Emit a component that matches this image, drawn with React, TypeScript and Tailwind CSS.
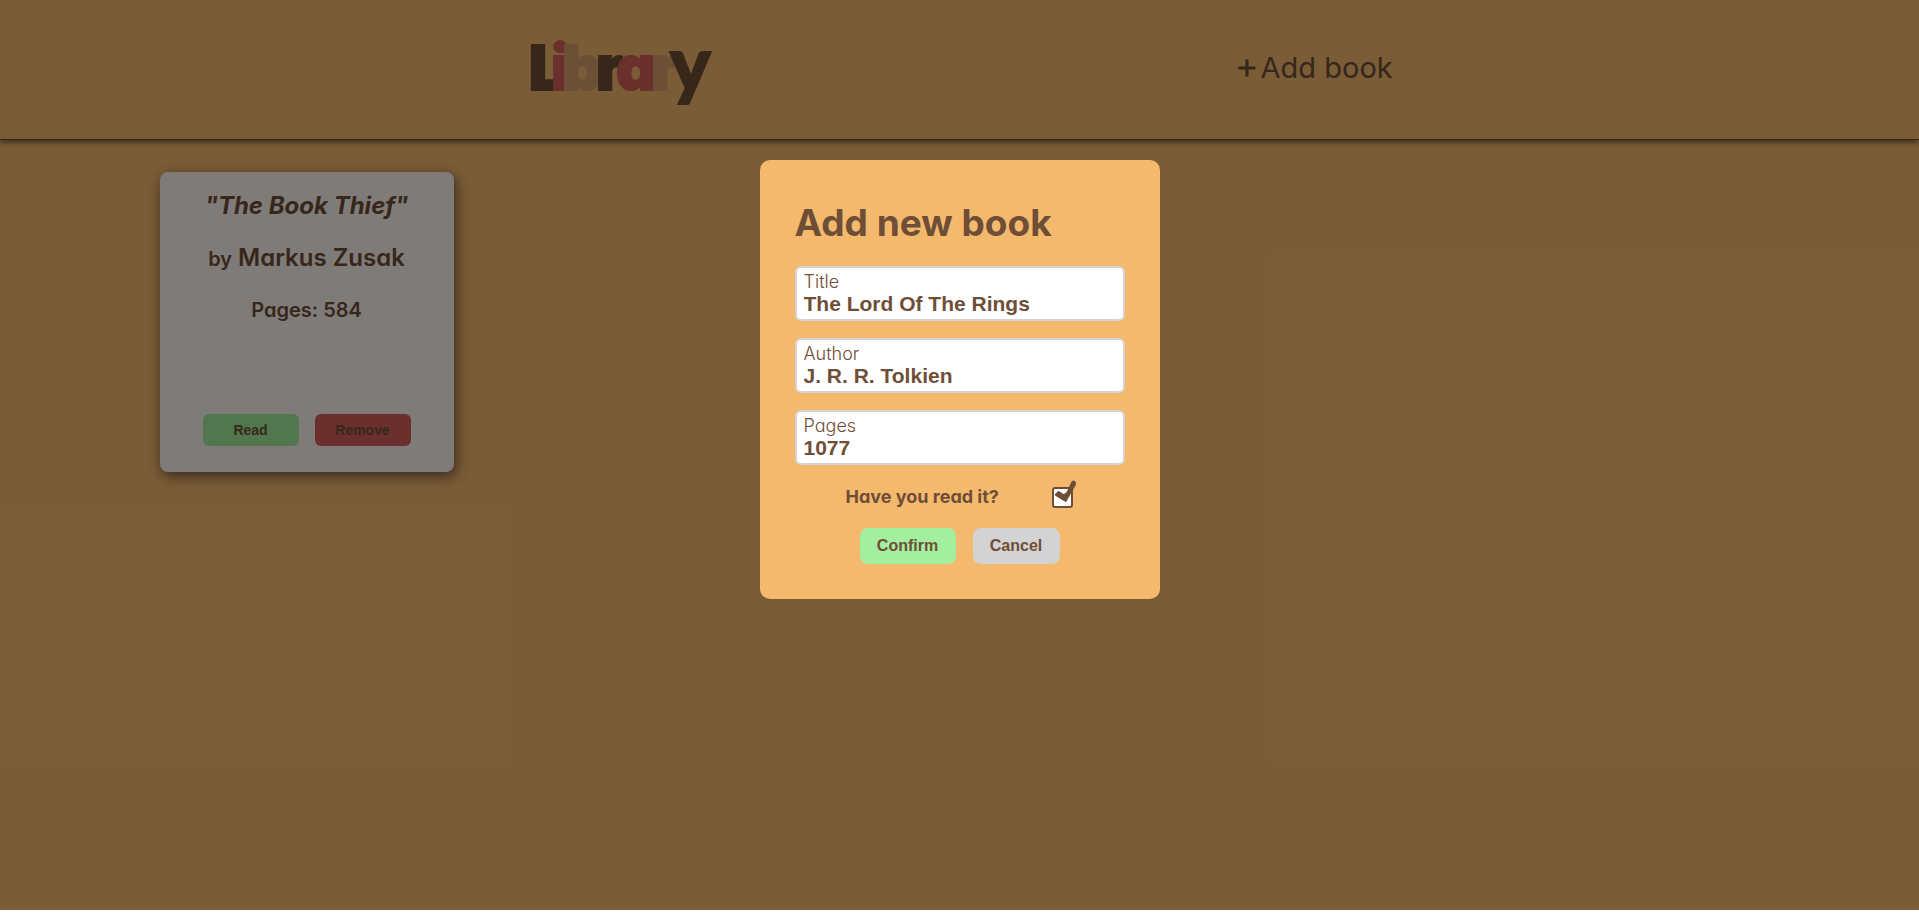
import { useState } from "react";

const logoLetters = [
  { char: "L", x: 3, fill: "#6f4e37" },
  { char: "i", x: 25, fill: "#d6605a" },
  { char: "b", x: 36, fill: "#d6a06e" },
  { char: "r", x: 70, fill: "#6f4e37" },
  { char: "a", x: 90, fill: "#d6605a" },
  { char: "r", x: 125, fill: "#d6a06e" },
];

function Logo() {
  return (
    <svg width="184" height="76" viewBox="0 0 184 76" role="img" aria-label="Library" className="overflow-visible">
      {logoLetters.map((l) => (
        <text
          key={l.x}
          x={l.x}
          y="58"
          fill={l.fill}
          stroke={l.fill}
          strokeWidth="2"
          className="font-['Inter',sans-serif] text-[62px] font-black"
        >
          {l.char}
        </text>
      ))}
      <text
        x="144"
        y="59"
        fill="#6f4e37"
        stroke="#6f4e37"
        strokeWidth="2"
        className="font-['Lato',sans-serif] text-[76px] font-black"
      >
        y
      </text>
    </svg>
  );
}

function Header() {
  return (
    <header className="flex h-[140px] items-center justify-evenly border-b border-[#6f4e37] shadow-[0_2px_6px_#6f4e37]">
      <Logo />
      <button type="button" className="mb-1 flex items-center gap-1 text-[29px] leading-10">
        <svg width="20" height="20" viewBox="0 0 20 20" aria-hidden="true">
          <path d="M1.5 10H18.5M10 1.5V18.5" stroke="currentColor" strokeWidth="3.2" />
        </svg>
        Add book
      </button>
    </header>
  );
}

function BookCard() {
  return (
    <article className="flex h-[300px] w-[294px] flex-col items-center rounded-lg bg-[#fff6f0] px-6 pt-4 pb-[26px] shadow-[2px_4px_14px_#6f4e37]">
      <h2 className="text-2xl leading-9 font-bold italic">"The Book Thief"</h2>
      <p className="mt-4 text-2xl leading-9 font-semibold">
        <span className="text-xl">by</span> Markus Zusak
      </p>
      <p className="mt-4 text-xl leading-9 font-semibold">Pages: 584</p>
      <div className="mt-auto flex gap-4 font-['Liberation_Sans',sans-serif] text-sm font-bold">
        <button type="button" className="h-8 w-24 rounded-md bg-[#a4ee9e]">
          Read
        </button>
        <button type="button" className="h-8 w-24 rounded-md bg-[#d6605a]">
          Remove
        </button>
      </div>
    </article>
  );
}

function Field({ id, label, initial }: { id: string; label: string; initial: string }) {
  const [value, setValue] = useState(initial);
  return (
    <div className="flex h-[55px] flex-col rounded-md border-2 border-[#d3d3d3] bg-white px-[7px] pt-1">
      <label htmlFor={id} className="text-lg leading-5 font-light">
        {label}
      </label>
      <input
        id={id}
        value={value}
        onChange={(e) => setValue(e.target.value)}
        className="w-full font-['Liberation_Sans',sans-serif] text-[21px] leading-6 font-bold outline-none"
      />
    </div>
  );
}

function AddBookDialog() {
  const [read, setRead] = useState(true);
  return (
    <div className="absolute inset-0 flex items-start justify-center bg-black/50 pt-40">
      <form
        role="dialog"
        aria-labelledby="dialog-title"
        onSubmit={(e) => e.preventDefault()}
        className="w-[400px] rounded-[10px] bg-[#f5b96d] p-[35px]"
      >
        <h1 id="dialog-title" className="mb-4 text-[37px] leading-[55px] font-bold">
          Add new book
        </h1>
        <div className="flex flex-col gap-[17px]">
          <Field id="title" label="Title" initial="The Lord Of The Rings" />
          <Field id="author" label="Author" initial="J. R. R. Tolkien" />
          <Field id="pages" label="Pages" initial="1077" />
        </div>
        <div className="mt-[18px] flex items-center justify-between pr-[52px] pl-[51px]">
          <label htmlFor="read" className="text-lg leading-7 font-bold">
            Have you read it?
          </label>
          <span className="relative flex">
            <input
              id="read"
              type="checkbox"
              checked={read}
              onChange={(e) => setRead(e.target.checked)}
              className="peer size-[21px] appearance-none rounded-[3px] border-2 border-[#6f4e37] bg-white"
            />
            <svg
              viewBox="0 -21 75 84"
              className="pointer-events-none absolute -top-[7px] left-0 hidden h-7 w-[25px] peer-checked:block"
              aria-hidden="true"
            >
              <path
                d="M10 20 L19 11 L36 22 L44 15 L58 -15 Q62 -23 69 -17 Q74 -13 71 -5 L42 46 L10 26 Q7 23 10 20 Z"
                fill="#6f4e37"
              />
            </svg>
          </span>
        </div>
        <div className="mt-[17px] flex justify-center gap-[17px] font-['Liberation_Sans',sans-serif] text-base font-bold">
          <button type="submit" className="h-9 w-24 rounded-lg bg-[#a4eea0]">
            Confirm
          </button>
          <button type="button" className="h-9 w-[87px] rounded-lg bg-[#d3d3d3]">
            Cancel
          </button>
        </div>
      </form>
    </div>
  );
}

export default function App() {
  return (
    <div className="relative min-h-[calc(100vh-5px)] bg-[#f5b96d] font-['Inter',sans-serif] text-[#6f4e37] [font-feature-settings:'cv11']">
      <Header />
      <main className="mx-auto max-w-[1600px] pt-8">
        <BookCard />
      </main>
      <AddBookDialog />
    </div>
  );
}
